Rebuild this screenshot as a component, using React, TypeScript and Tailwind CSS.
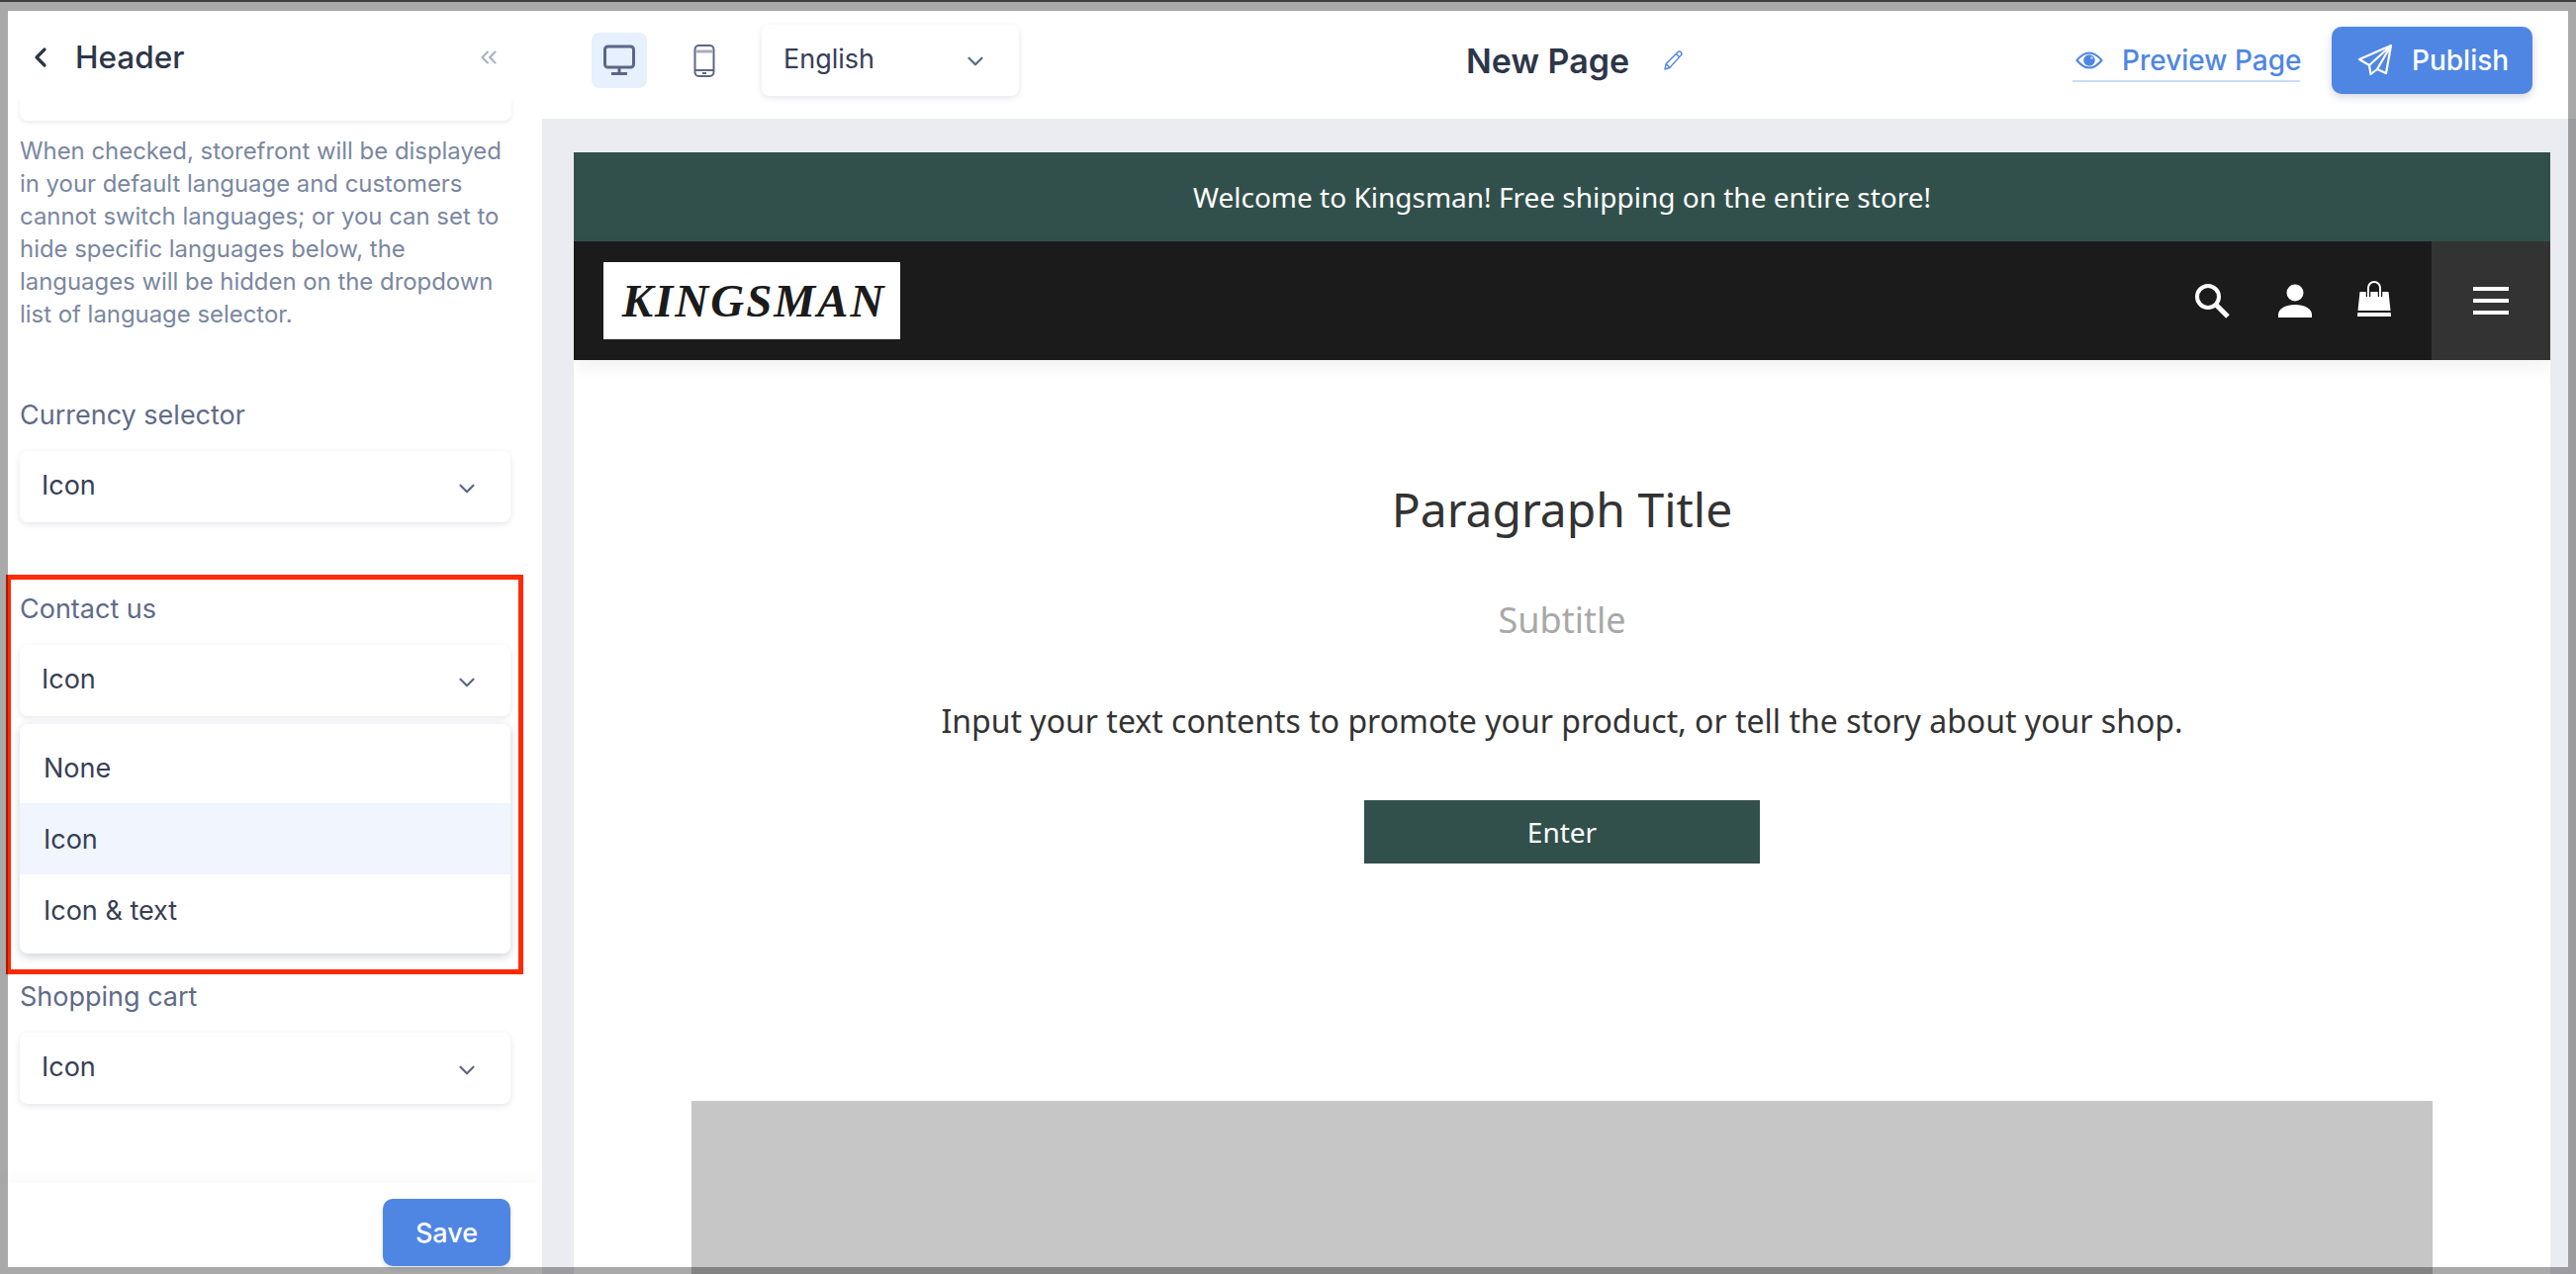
import { ChevronDown, ChevronLeft, ChevronsLeft } from "lucide-react";

function Select({ text }: { text: string }) {
  return (
    <div className="flex h-[72px] w-[496px] items-center justify-between rounded-lg bg-white pl-[22px] pr-[31px] text-[27px] text-[#374056] shadow-[0_2px_6px_rgba(40,50,80,0.12)]">
      <span className="-mt-[2px]">{text}</span>
      <ChevronDown size={26} strokeWidth={2} className="mt-[3px] text-[#5b6785]" />
    </div>
  );
}

function Label({ text, className }: { text: string; className: string }) {
  return <div className={`mb-[20px] h-[36px] pt-[2px] text-[27px] leading-[36px] text-[#5f6b88] ${className}`}>{text}</div>;
}

function Sidebar() {
  return (
    <aside className="flex h-full w-[548px] shrink-0 flex-col bg-white pl-[20px] pr-[32px]">
      <div className="relative z-10 -ml-[20px] -mr-[32px] flex h-[100px] shrink-0 items-center bg-white pl-[25px] pr-[41px]">
        <ChevronLeft size={32} strokeWidth={2.4} className="mt-[16px] text-[#2d3648]" />
        <span className="ml-[19px] mt-[16px] text-[31.5px] font-medium leading-none text-[#2d3648]">Header</span>
        <ChevronsLeft size={26} strokeWidth={2} className="ml-auto mt-[16px] text-[#a9b3c8]" />
      </div>
      <div className="h-[22px] w-[497px] shrink-0 rounded-b-lg bg-white shadow-[0_2px_4px_rgba(40,50,80,0.1)]" />
      <p className="mt-[14px] w-[510px] text-[23.9px] leading-[33px] text-[#7a87a0]">
        When checked, storefront will be displayed
        <br />
        in your default language and customers
        <br />
        cannot switch languages; or you can set to
        <br />
        hide specific languages below, the
        <br />
        languages will be hidden on the dropdown
        <br />
        list of language selector.
      </p>
      <Label text="Currency selector" className="mt-[66px]" />
      <Select text="Icon" />
      <Label text="Contact us" className="mt-[68px]" />
      <Select text="Icon" />
      <div className="mt-[8px] w-[496px] rounded-lg bg-white py-[8px] text-[27px] text-[#374056] shadow-[0_3px_10px_rgba(40,50,80,0.22)]">
        <div className="flex h-[72px] items-center pl-[24px] pt-[2px]">None</div>
        <div className="flex h-[72px] items-center bg-[#f1f5fd] pl-[24px] pt-[2px]">Icon</div>
        <div className="flex h-[72px] items-center pl-[24px] pt-[2px]">Icon &amp; text</div>
      </div>
      <Label text="Shopping cart" className="mt-[24px]" />
      <Select text="Icon" />
      <div className="flex-1" />
      <div className="-ml-[20px] -mr-[32px] flex h-[92px] shrink-0 justify-end bg-white pr-[32px] pt-[16px] shadow-[0_-8px_16px_rgba(40,50,80,0.02)]">
        <button className="h-[68px] w-[129px] rounded-[10px] bg-[#4f86e4] pt-[2px] text-[27px] font-medium text-white shadow-[0_2px_4px_rgba(40,50,80,0.15)]">Save</button>
      </div>
    </aside>
  );
}

function TopBar() {
  return (
    <header className="relative z-10 flex h-[120px] shrink-0 items-center bg-white pl-[50px] pr-[44px] pt-[2px]">
      <div className="flex h-[56px] w-[56px] items-center justify-center rounded-lg bg-[#e6f0fe]">
        <svg width="34" height="32" viewBox="0 0 34 32" fill="none" stroke="#5b6785" strokeWidth="3">
          <rect x="2.5" y="2" width="29" height="21" rx="3" />
          <path d="M17 23v6M9 29.5h16" />
        </svg>
      </div>
      <div className="ml-[30px] flex w-[56px] justify-center">
        <svg width="22" height="33" viewBox="0 0 22 33" fill="none" stroke="#5b6785" strokeWidth="2">
          <rect x="1.5" y="1" width="19" height="31" rx="4" />
          <path d="M2 7h18" stroke="#a6adbd" strokeWidth="3" />
          <path d="M2 26h18" />
          <path d="M9 29h4" />
        </svg>
      </div>
      <div className="ml-[30px] flex h-[72px] w-[260px] items-center justify-between rounded-lg bg-white pl-[22px] pr-[31px] text-[27px] text-[#374056] shadow-[0_2px_6px_rgba(40,50,80,0.12)]">
        <span className="-mt-[2px]">English</span>
        <ChevronDown size={26} strokeWidth={2} className="mt-[1px] text-[#5b6785]" />
      </div>
      <span className="ml-[452px] mt-[2px] text-[34px] font-semibold leading-none text-[#2d3648]">New Page</span>
      <svg className="ml-[34px]" width="22" height="22" viewBox="0 0 22 22" fill="none" stroke="#4f86e4" strokeWidth="1.4" strokeLinejoin="round">
        <path d="M2 20l1.2-5.5L15 2.7a2.2 2.2 0 0 1 3.2 3.2L6.8 18.5z" />
        <path d="M13.3 4.4l3.2 3.2M3.2 14.5l3.6 4" />
      </svg>
      <div className="ml-auto mt-[2px] flex h-[42px] w-[230px] items-center gap-[19px] self-center border-b-2 border-[#c9defc] text-[28px] font-medium leading-none text-[#4f86e4]">
        <svg width="28" height="18" viewBox="0 0 28 18" className="ml-[3px] shrink-0">
          <path d="M1.5 9C6 3.5 10 1.5 14 1.5S22 3.500 26.500 9C22 14.500 18 16.500 14 16.500S6 14.500 1.500 9z" fill="none" stroke="#4f86e4" strokeWidth="2" />
          <circle cx="14" cy="9" r="5.800" fill="#4f86e4" />
          <circle cx="16.500" cy="6.500" r="1.500" fill="#a9c6f5" />
        </svg>
        <span className="whitespace-nowrap">Preview Page</span>
      </div>
      <button className="ml-[32px] flex h-[68px] w-[203px] items-center rounded-[10px] bg-[#4f86e4] pl-[26px] text-[28px] font-medium text-white shadow-[0_3px_8px_rgba(40,50,80,0.2)]">
        <svg width="38" height="36" viewBox="0 0 38 36" fill="none" stroke="#fff" strokeWidth="2.200" strokeLinejoin="round">
          <path d="M34 3L2 17l10 6 1.500 9 6.500-5 9 4zM34 3L12 23M34 3L20 27" />
        </svg>
        <span className="ml-[17px]">Publish</span>
      </button>
    </header>
  );
}

function StoreNav() {
  return (
    <nav className="relative flex h-[120px] shrink-0 items-center bg-[#1b1b1b] pl-[30px] shadow-[0_8px_16px_rgba(0,0,0,0.05)]">
      <div className="flex h-[78px] w-[300px] items-center justify-center bg-white pl-[4px] font-['Liberation_Serif',serif] text-[47px] font-bold italic leading-none tracking-[2px] text-[#1b1b1b]">
        KINGSMAN
      </div>
      <svg className="ml-auto shrink-0" width="36" height="36" viewBox="0 0 36 36" fill="none" stroke="#fff">
        <circle cx="14" cy="14" r="11" strokeWidth="4" />
        <path d="M22 22l12 12" strokeWidth="5" />
      </svg>
      <svg className="ml-[48px] shrink-0" width="36" height="36" viewBox="0 0 36 36" fill="#fff">
        <circle cx="18" cy="10" r="8.500" />
        <path d="M1 35v-3c0-6 8-10 17-10s17 4 17 10v3z" />
      </svg>
      <svg className="-mt-[2px] ml-[43px] shrink-0" width="38" height="38" viewBox="0 0 38 38" fill="#fff">
        <path d="M4.500 11h29l2 19H2.500zM2.300 32h33.400l.300 4H2z" />
        <path d="M13 16V7a6 6 0 0 1 12 0v9" fill="none" stroke="#1b1b1b" strokeWidth="4.500" />
        <path d="M13 16V7a6 6 0 0 1 12 0v9" fill="none" stroke="#fff" strokeWidth="2" />
      </svg>
      <div className="ml-[39px] flex h-full w-[120px] flex-col items-center justify-center gap-[8px] bg-[#333333]">
        <div className="h-[4px] w-[36px] bg-white" />
        <div className="h-[4px] w-[36px] bg-white" />
        <div className="h-[4px] w-[36px] bg-white" />
      </div>
    </nav>
  );
}

function Preview() {
  return (
    <div className="min-h-0 flex-1 bg-[#ebecf1] pl-[32px] pr-[26px] pt-[34px]">
      <div className="flex h-full flex-col overflow-hidden bg-white font-['Noto_Sans',sans-serif]">
        <div className="flex h-[90px] shrink-0 items-center justify-center bg-[#32504b] text-[28px] text-white">
          Welcome to Kingsman! Free shipping on the entire store!
        </div>
        <StoreNav />
        <div className="flex flex-col items-center">
          <h1 className="mt-[119px] text-[48px] leading-[64px] text-[#333333]">Paragraph Title</h1>
          <h2 className="mt-[56px] text-[36px] leading-[48px] text-[#a8a8a8]">Subtitle</h2>
          <p className="mt-[56px] text-[32px] leading-[44px] text-[#333333]">
            Input your text contents to promote your product, or tell the story about your shop.
          </p>
          <button className="mt-[58px] h-[64px] w-[400px] bg-[#32504b] text-[28px] text-white">Enter</button>
          <div className="mt-[240px] h-[400px] w-[1760px] bg-[#c6c6c6]" />
        </div>
      </div>
    </div>
  );
}

export default function App() {
  return (
    <div className="relative flex h-[1288px] w-[2604px] overflow-hidden bg-white font-['Inter',sans-serif]">
      <Sidebar />
      <main className="flex h-full min-w-0 flex-1 flex-col">
        <TopBar />
        <Preview />
      </main>
      {/* red annotation rectangle */}
      <div className="pointer-events-none absolute left-[6px] top-[581px] z-20 h-[404px] w-[523px] border-[5px] border-[#ff2a00]" />
      {/* dimmed window frame lying over the capture */}
      <div className="pointer-events-none absolute inset-0 z-30 border-b-[7px] border-l-[8px] border-r-[8px] border-t-[11px] border-black/[0.337]" />
      <div className="pointer-events-none absolute inset-x-0 top-0 z-40 h-[2px] bg-[#3f3f3f]" />
    </div>
  );
}
